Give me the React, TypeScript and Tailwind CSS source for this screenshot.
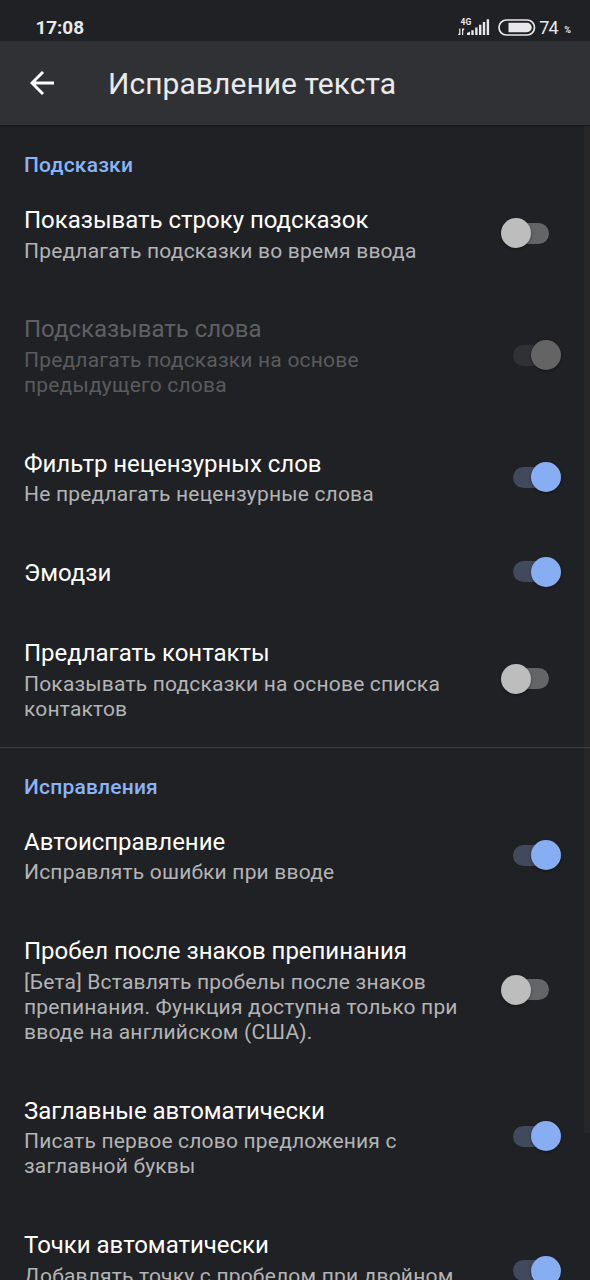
import clsx from "clsx";

type Setting = {
  title: string;
  summary?: string[];
  on: boolean;
  disabled?: boolean;
};

type Section = { name: string; items: Setting[] };

const sections: Section[] = [
  {
    name: "Подсказки",
    items: [
      { title: "Показывать строку подсказок", summary: ["Предлагать подсказки во время ввода"], on: false },
      { title: "Подсказывать слова", summary: ["Предлагать подсказки на основе", "предыдущего слова"], on: true, disabled: true },
      { title: "Фильтр нецензурных слов", summary: ["Не предлагать нецензурные слова"], on: true },
      { title: "Эмодзи", on: true },
      { title: "Предлагать контакты", summary: ["Показывать подсказки на основе списка", "контактов"], on: false },
    ],
  },
  {
    name: "Исправления",
    items: [
      { title: "Автоисправление", summary: ["Исправлять ошибки при вводе"], on: true },
      {
        title: "Пробел после знаков препинания",
        summary: ["[Бета] Вставлять пробелы после знаков", "препинания. Функция доступна только при", "вводе на английском (США)."],
        on: false,
      },
      { title: "Заглавные автоматически", summary: ["Писать первое слово предложения с", "заглавной буквы"], on: true },
      { title: "Точки автоматически", summary: ["Добавлять точку с пробелом при двойном", "нажатии на пробел"], on: true },
    ],
  },
];

function Toggle({ on, disabled }: { on: boolean; disabled?: boolean }) {
  return (
    <div className={clsx("flex h-[30px] w-[60px] shrink-0 items-center", on ? "justify-end" : "justify-start")}>
      {on && <div className={clsx("-mr-[18px] h-[21px] w-[36px] rounded-full", disabled ? "bg-[#303135]" : "bg-[#41495c]")} />}
      <div
        className={clsx(
          "z-10 size-[30px] shrink-0 rounded-full shadow-[0_1px_3px_rgba(0,0,0,0.4)]",
          disabled ? "bg-[#646464]" : on ? "bg-[#87adf2]" : "bg-[#bdbdbd]",
        )}
      />
      {!on && <div className="-ml-[18px] h-[21px] w-[36px] rounded-full bg-[#646567]" />}
    </div>
  );
}

function SettingRow({ item }: { item: Setting }) {
  return (
    <div className="flex items-center justify-between pt-[26px] pr-[29px] pb-[25.9px] pl-6">
      <div>
        <div className={clsx("text-[24px] leading-[28px] tracking-[-0.02px] whitespace-nowrap", item.disabled ? "text-[#5f6062]" : "text-white")}>{item.title}</div>
        {item.summary && (
          <div className={clsx("pt-[4.5px] text-[21px] leading-[25px] tracking-[0.19px] whitespace-nowrap", item.disabled ? "text-[#5a5b5d]" : "text-[#b3b4b5]")}>
            {item.summary.map(line => <p key={line}>{line}</p>)}
          </div>
        )}
      </div>
      <div className="-mt-[3px]">
        <Toggle on={item.on} disabled={item.disabled} />
      </div>
    </div>
  );
}

function StatusBar() {
  return (
    <div className="flex h-[41px] items-start justify-between pt-[16px] pr-[19px] pl-[35.5px] text-[#e8e8ea]">
      <span className="text-[19px] leading-[24px] font-bold tracking-[-0.1px]">17:08</span>
      <div className="flex items-start">
        <svg width="32" height="20" viewBox="0 0 32 20" fill="currentColor">
          <text x="2.5" y="9" fontSize="8.5" fontWeight="700" fontFamily="Roboto, sans-serif">4G</text>
          <path d="M1.2 12.5h1.2V19H1.2zM2.4 19H0l1.2-2.2zM4 12.5h1.2V19H4zM4 12.5h2.6l-1.4 2.4z" />
          <path d="M9 19v-2l3-1.5V19zM13.3 14.2h2.4V19h-2.4zM17.2 11.5h2.4V19h-2.4zM21 8.7h2.4V19H21zM24.8 6h2.4v13h-2.4zM28.7 3.2h2.4V19h-2.4z" />
        </svg>
        <svg className="mt-[2.5px] ml-[8px]" width="38" height="18" viewBox="0 0 38 18">
          <rect x="1" y="1" width="35.5" height="15" rx="7.5" fill="none" stroke="currentColor" strokeWidth="1.7" />
          <path d="M10.5 3.8H29a4.7 4.7 0 0 1 0 9.4H10.5z" fill="currentColor" />
        </svg>
        <span className="ml-[3px] text-[18px] leading-[24px] tracking-[-0.8px]">74</span>
        <span className="mt-[5px] ml-[6.5px] text-[9px] leading-[18px] font-bold">%</span>
      </div>
    </div>
  );
}

export default function App() {
  return (
    <div className="relative h-[1280px] w-[590px] overflow-hidden bg-[#202124] font-['Roboto',sans-serif]">
      <StatusBar />
      <header className="flex h-[84px] items-center bg-[#303134] pl-[30px] shadow-[0_1px_2px_rgba(0,0,0,0.4)]">
        <svg width="24" height="24" viewBox="0 0 24 24" fill="none" stroke="#fff" strokeWidth="2.9">
          <path d="M24 12H2M13 1 2 12l11 11" />
        </svg>
        <h1 className="ml-[54px] pt-[2px] text-[30px] leading-[36px] tracking-[0.05px] text-[#e8eaed]">Исправление текста</h1>
      </header>
      <main>
        {sections.map((section, i) => (
          <section key={section.name} className={clsx(i > 0 && "border-t border-[#3c3d40]")}>
            <h2 className={clsx("flex h-[55px] items-center pt-[26px] pl-6 text-[21px] leading-[25px] font-medium tracking-[0.2px] text-[#8ab4f8]", i > 0 && "-mt-px -mb-[0.5px]")}>
              {section.name}
            </h2>
            {section.items.map(item => <SettingRow key={item.title} item={item} />)}
          </section>
        ))}
      </main>
      {/* scrollbar thumb over the list */}
      <div className="absolute top-[126px] right-0 h-[1007px] w-[6px] bg-white/[0.03]" />
    </div>
  );
}
